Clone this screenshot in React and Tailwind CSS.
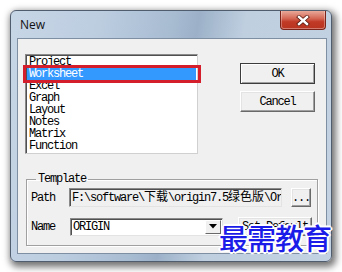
import React from "react";

const mono = "font-['Liberation_Mono','Noto_Sans_CJK_SC',monospace] text-[12px] tracking-[-1.2px] text-black";
const cjk = "text-[12px] tracking-normal";

function Btn({ children, className = "", isDefault = false }) {
  return (
    <div
      className={
        "flex items-center justify-center bg-[#f0f0f0] " +
        (isDefault
          ? "border border-[#3c3c3c] shadow-[inset_1px_1px_0_#ffffff,inset_-1px_-1px_0_#a0a0a0] "
          : "border border-t-[#ffffff] border-l-[#ffffff] border-r-[#696969] border-b-[#696969] shadow-[inset_-1px_-1px_0_#a0a0a0,inset_1px_1px_0_#e3e3e3] ") +
        mono +
        " " +
        className
      }
    >
      {children}
    </div>
  );
}

const items = ["Project", "Worksheet", "Excel", "Graph", "Layout", "Notes", "Matrix", "Function"];

export default function App() {
  return (
    <div className="relative w-[342px] h-[272px] bg-white overflow-hidden pt-[10px] pl-[10px]">
      {/* window */}
      <div className="w-[322px] h-[252px] rounded-[6px] border border-[#4f5d6e] bg-[linear-gradient(100deg,#c7d6e6_0%,#bccde0_25%,#a7bbd1_45%,#9cb1c8_52%,#bfcfe0_65%,#c3d2e3_100%)] shadow-[2px_3px_7px_2px_rgba(0,0,0,0.55)] flex flex-col">
        {/* title bar */}
        <div className="h-[27px] flex items-start shrink-0">
          <div className="pl-[9px] h-[27px] flex items-center font-['Open_Sans',sans-serif] text-[12px] text-[#111]">
            New
          </div>
          <div className="ml-auto mr-[5px] w-[46px] h-[19px] rounded-b-[4px] border border-t-0 border-[#7b2318] bg-[linear-gradient(180deg,#e9a898_0%,#d66a58_40%,#c03a26_60%,#b93420_100%)] shadow-[inset_0_-1px_0_rgba(255,255,255,0.35),inset_1px_0_0_rgba(255,255,255,0.3),inset_-1px_0_0_rgba(255,255,255,0.3)] flex items-center justify-center">
            <svg width="14" height="11" viewBox="0 0 14 11">
              <path d="M3 2 L11 9 M11 2 L3 9" stroke="#5a1a10" strokeWidth="4" strokeLinecap="square" />
              <path d="M3 2 L11 9 M11 2 L3 9" stroke="#ffffff" strokeWidth="2.4" strokeLinecap="square" />
            </svg>
          </div>
        </div>
        {/* client */}
        <div className="flex-1 pl-[6px] pr-[4px] pb-[7px] flex">
          <div className="flex-1 border border-[#7f8fa3] bg-[#f0f0f0] flex flex-col">
            <div className="flex">
              {/* listbox */}
              <div className="ml-[7px] mt-[15px] w-[173px] h-[100px] bg-white border border-[#8a8a8a] border-b-[#d0d0d0] border-r-[#d0d0d0] shadow-[inset_1px_1px_0_#505050] pt-[1px] relative overflow-hidden">
                {items.map((it, i) => (
                  <div
                    key={it}
                    className={
                      "h-[12px] leading-[12px] pl-[2px] mx-[1px] " +
                      mono +
                      (i === 1 ? " bg-[#3399ff] !text-white" : "")
                    }
                  >
                    {it}
                  </div>
                ))}
              </div>
              {/* buttons */}
              <div className="ml-[42px] mt-[24px] flex flex-col gap-[7px]">
                <Btn isDefault className="w-[75px] h-[21px]">OK</Btn>
                <Btn className="w-[75px] h-[21px]">Cancel</Btn>
              </div>
            </div>
            {/* group box */}
            <fieldset className="ml-[8px] mt-[19px] w-[292px] h-[73px] border border-[#a0a0a0] shadow-[inset_1px_1px_0_#ffffff,1px_1px_0_#ffffff] px-[4px] pt-[3px] m-0 min-w-0">
              <legend className={"ml-[5px] px-[2px] leading-[12px] " + mono}>Template</legend>
              <div className="flex items-center">
                <div className={"w-[38px] " + mono}>Path</div>
                <div className="w-[213px] h-[19px] bg-[#f0f0f0] border border-[#8a8a8a] border-b-[#e3e3e3] border-r-[#e3e3e3] shadow-[inset_1px_1px_0_#505050] flex items-center pl-[2px] overflow-hidden whitespace-nowrap">
                  <span className={mono}>
                    F:\software\<span className={cjk}>下载</span>\origin7.5<span className={cjk}>绿色版</span>\Or
                  </span>
                </div>
                <Btn className="ml-[9px] w-[20px] h-[19px]">...</Btn>
              </div>
              <div className="flex items-center mt-[10px]">
                <div className={"w-[39px] " + mono}>Name</div>
                <div className="w-[153px] h-[18px] bg-white border border-[#8a8a8a] border-b-[#e3e3e3] border-r-[#e3e3e3] shadow-[inset_1px_1px_0_#505050] flex items-center">
                  <span className={"pl-[2px] " + mono}>ORIGIN</span>
                  <div className="ml-auto mr-[1px] w-[16px] h-[14px] bg-[#f0f0f0] border border-t-[#ffffff] border-l-[#ffffff] border-r-[#696969] border-b-[#696969] flex items-center justify-center">
                    <svg width="8" height="5" viewBox="0 0 8 5">
                      <path d="M0 0 H8 L4 4.5 Z" fill="#000" />
                    </svg>
                  </div>
                </div>
                <Btn className="ml-[15px] w-[74px] h-[19px]">Set Default</Btn>
              </div>
            </fieldset>
          </div>
        </div>
      </div>
      {/* red highlight box */}
      <div className="absolute left-[23px] top-[65px] w-[178px] h-[18px] border-[3px] border-[#d41e2c]" />
      {/* watermark */}
      <div className="absolute left-[219px] top-[223px] text-[29px] leading-none font-['Noto_Sans_CJK_SC',sans-serif] font-medium text-[#1c1ce8] tracking-[-1px] [text-shadow:1px_1px_0_#fff,-1px_-1px_0_#fff,1px_-1px_0_#fff,-1px_1px_0_#fff,0_2px_0_#fff,2px_0_0_#fff,0_-2px_0_#fff,-2px_0_0_#fff]">
        最需教育
      </div>
    </div>
  );
}
